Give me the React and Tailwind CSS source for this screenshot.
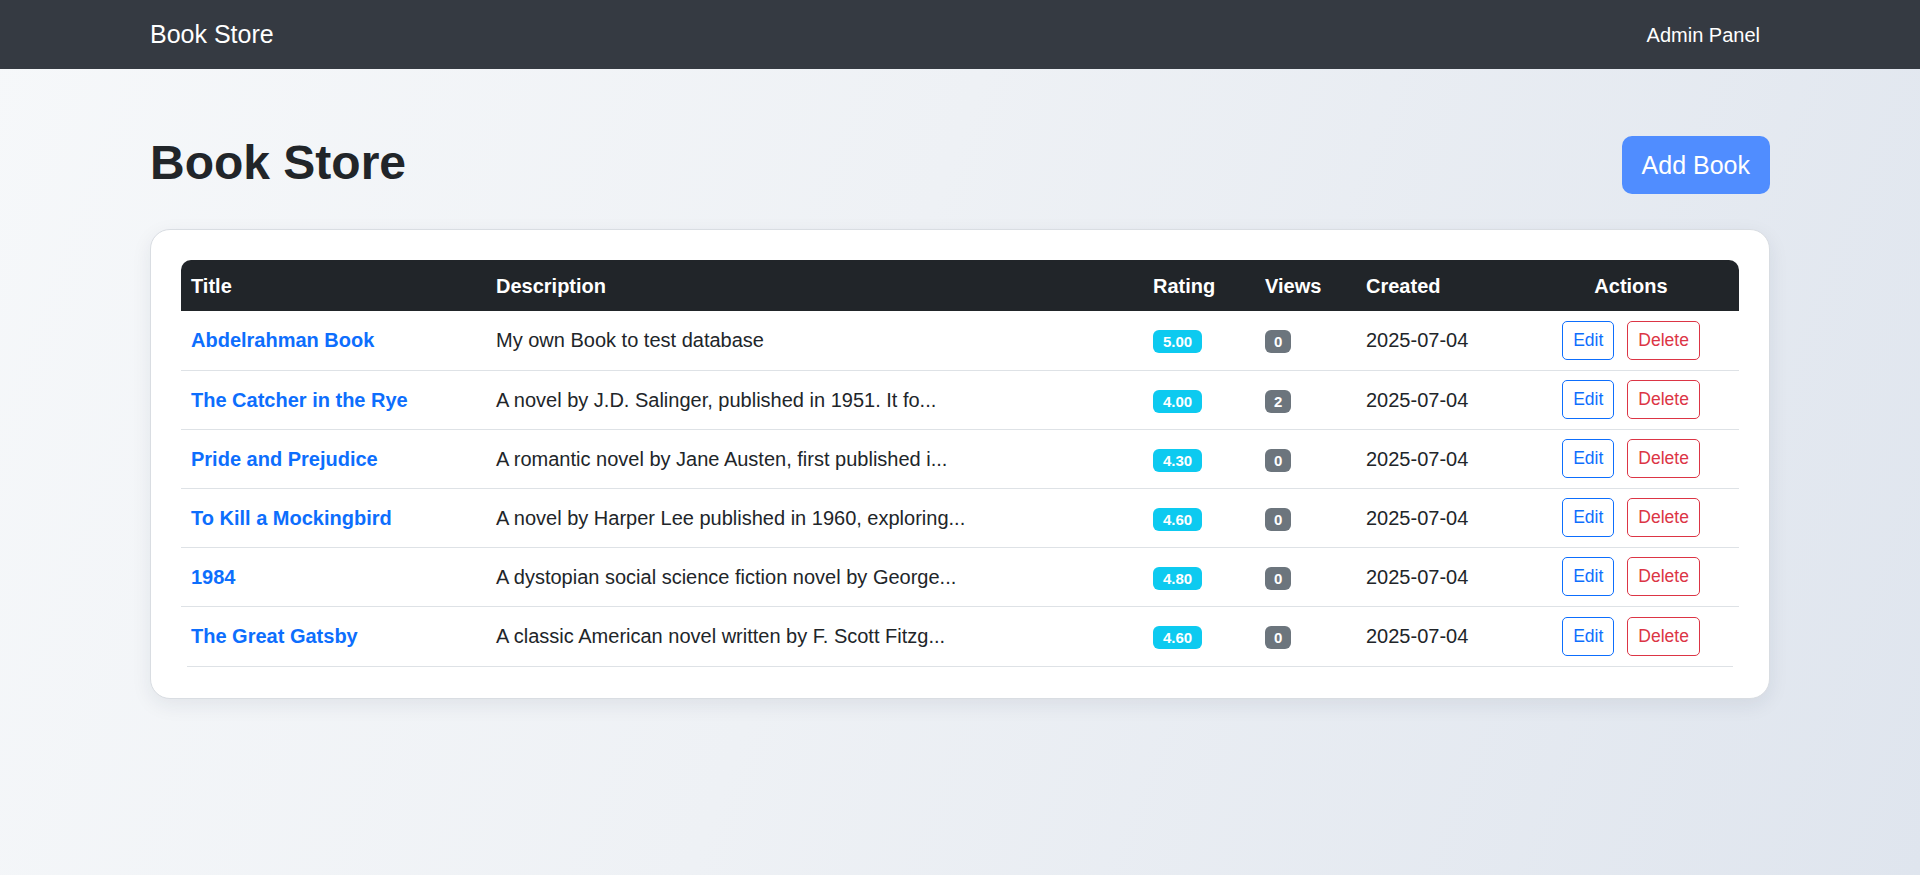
import React from "react";

const books = [
  { title: "Abdelrahman Book", desc: "My own Book to test database", rating: "5.00", views: "0" },
  { title: "The Catcher in the Rye", desc: "A novel by J.D. Salinger, published in 1951. It fo...", rating: "4.00", views: "2" },
  { title: "Pride and Prejudice", desc: "A romantic novel by Jane Austen, first published i...", rating: "4.30", views: "0" },
  { title: "To Kill a Mockingbird", desc: "A novel by Harper Lee published in 1960, exploring...", rating: "4.60", views: "0" },
  { title: "1984", desc: "A dystopian social science fiction novel by George...", rating: "4.80", views: "0" },
  { title: "The Great Gatsby", desc: "A classic American novel written by F. Scott Fitzg...", rating: "4.60", views: "0" },
];

export default function App() {
  return (
    <div
      className="min-h-[875px] w-full bg-[linear-gradient(110deg,#f6f8fa_0%,#eef1f5_45%,#dfe5ee_100%)] text-[#212529]"
      style={{ fontFamily: '"Liberation Sans", Arial, sans-serif' }}
    >
      <nav className="h-[69px] bg-[#353a42]">
        <div className="mx-auto flex h-full w-[1620px] items-center justify-between">
          <span className="text-[25px] leading-none text-white">Book Store</span>
          <span className="mr-[10px] text-[20px] leading-none text-white">Admin Panel</span>
        </div>
      </nav>

      <main className="mx-auto w-[1620px] pt-[63px]">
        <div className="flex h-[62px] items-center justify-between">
          <h1 className="text-[48px] font-bold leading-[60px] text-[#212529]">Book Store</h1>
          <button className="mt-[4px] h-[58px] rounded-[10px] bg-[#508dff] px-[20px] text-[25px] leading-none text-white">
            Add Book
          </button>
        </div>

        <div className="mt-[35px] rounded-[20px] border border-[#d9dde2] bg-white p-[30px] pb-[31px] shadow-[0_6px_20px_rgba(30,40,60,0.08)]">
          <table className="w-[1558px] table-fixed border-collapse text-[20px]">
            <colgroup>
              <col className="w-[305px]" />
              <col className="w-[657px]" />
              <col className="w-[112px]" />
              <col className="w-[101px]" />
              <col className="w-[167px]" />
              <col className="w-[216px]" />
            </colgroup>
            <thead>
              <tr className="h-[51px] bg-[#212529] text-left font-bold text-white">
                <th className="rounded-tl-[10px] px-[10px]">Title</th>
                <th className="px-[10px]">Description</th>
                <th className="px-[10px]">Rating</th>
                <th className="px-[10px]">Views</th>
                <th className="px-[10px]">Created</th>
                <th className="rounded-tr-[10px] px-[10px] text-center">Actions</th>
              </tr>
            </thead>
            <tbody>
              {books.map((b, i) => (
                <tr
                  key={b.title}
                  className={i < books.length - 1 ? "h-[59px] border-b border-[#dee2e6]" : "h-[60px]"}
                >
                  <td className="px-[10px] font-bold text-[#0d6efd]">{b.title}</td>
                  <td className="whitespace-nowrap px-[10px]">{b.desc}</td>
                  <td className="px-[10px]">
                    <span className="inline-block rounded-[6px] bg-[#0dcaf0] px-[10px] py-[4px] text-[15px] font-bold leading-[15px] text-white">
                      {b.rating}
                    </span>
                  </td>
                  <td className="px-[10px]">
                    <span className="inline-block rounded-[6px] bg-[#6c757d] px-[9px] py-[4px] text-[15px] font-bold leading-[15px] text-white">
                      {b.views}
                    </span>
                  </td>
                  <td className="px-[10px]">2025-07-04</td>
                  <td className="px-[10px]">
                    <div className="flex items-center justify-center gap-[13px]">
                      <button className="h-[39px] rounded-[5px] border border-[#0d6efd] px-[10px] text-[17.5px] leading-none text-[#0d6efd]">
                        Edit
                      </button>
                      <button className="h-[39px] rounded-[5px] border border-[#dc3545] px-[10px] text-[17.5px] leading-none text-[#dc3545]">
                        Delete
                      </button>
                    </div>
                  </td>
                </tr>
              ))}
            </tbody>
          </table>
          <div className="mx-[6px] h-px bg-[#dee2e6]" />
        </div>
      </main>
    </div>
  );
}
